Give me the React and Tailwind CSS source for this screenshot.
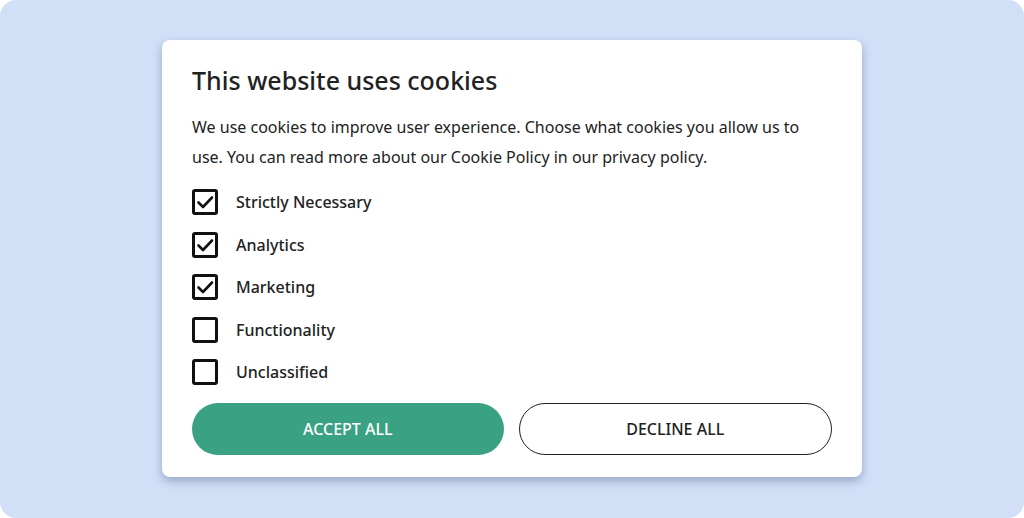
import React, { useState } from 'react';

const options = [
  { label: 'Strictly Necessary', checked: true },
  { label: 'Analytics', checked: true },
  { label: 'Marketing', checked: true },
  { label: 'Functionality', checked: false },
  { label: 'Unclassified', checked: false },
];

const CheckBox = ({ checked }) => (
  <span className="flex h-[26px] w-[26px] shrink-0 items-center justify-center rounded-[3px] border-[3px] border-[#111]">
    {checked && (
      <svg width="18" height="18" viewBox="0 0 18 18" fill="none">
        <path d="M2.5 9.5 L7 14 L16 4.5" stroke="#111" strokeWidth="2.6" strokeLinecap="round" strokeLinejoin="round" />
      </svg>
    )}
  </span>
);

const App = () => {
  const [items, setItems] = useState(options);

  const toggle = (i) => {
    setItems(items.map((it, idx) => (idx === i ? { ...it, checked: !it.checked } : it)));
  };

  return (
    <div className="min-h-screen bg-white" style={{ fontFamily: '"Noto Sans", "Open Sans", sans-serif' }}>
      <div className="flex h-[518px] items-start justify-center rounded-[16px] bg-[#d1e0f7] pt-[40px]">
        <div className="w-[700px] rounded-[8px] bg-white px-[30px] pb-[22px] pt-[24px] shadow-[0_4px_10px_rgba(40,60,100,0.35)]">
          <h1 className="text-[25px] font-medium leading-[32px] text-[#222]">This website uses cookies</h1>
          <p className="mt-[16px] text-[16px] leading-[30px] text-[#222]">
            We use cookies to improve user experience. Choose what cookies you allow us to use. You can read more about our Cookie Policy in our privacy policy.
          </p>
          <div className="mt-[9px] flex flex-col">
            {items.map((it, i) => (
              <label
                key={it.label}
                onClick={() => toggle(i)}
                className="flex h-[42.5px] cursor-pointer items-center gap-[18px]"
              >
                <CheckBox checked={it.checked} />
                <span className="text-[16px] font-medium text-[#222]">{it.label}</span>
              </label>
            ))}
          </div>
          <div className="mt-[9px] flex gap-[15px]">
            <button className="h-[52px] flex-1 rounded-full bg-[#3aa283] text-[16px] font-medium uppercase text-white">
              Accept all
            </button>
            <button className="h-[52px] flex-1 rounded-full border-[1.5px] border-[#222] bg-white text-[16px] font-medium uppercase text-[#222]">
              Decline all
            </button>
          </div>
        </div>
      </div>
    </div>
  );
};

export default App;
